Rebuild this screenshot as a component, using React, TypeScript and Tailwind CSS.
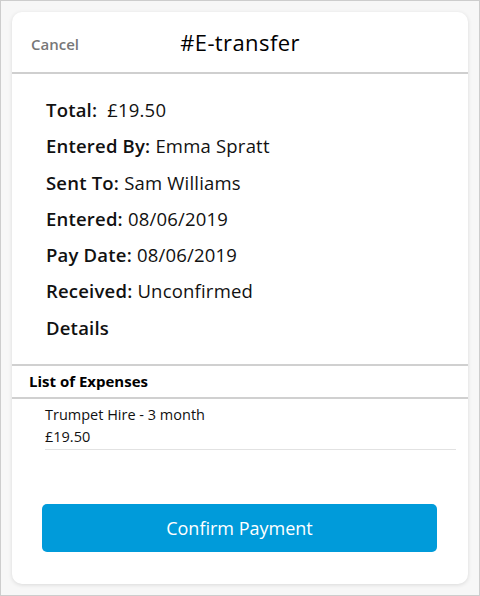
const ROWS = [
  { label: 'Total:', value: '£19.50', gap: 'ml-[10px]' },
  { label: 'Entered By:', value: 'Emma Spratt', gap: 'ml-[5px]' },
  { label: 'Sent To:', value: 'Sam Williams', gap: 'ml-[5px]' },
  { label: 'Entered:', value: '08/06/2019', gap: 'ml-[5px]' },
  { label: 'Pay Date:', value: '08/06/2019', gap: 'ml-[5px]' },
  { label: 'Received:', value: 'Unconfirmed', gap: 'ml-[5px]' },
  { label: 'Details', value: '', gap: '' },
]

const EXPENSES = [{ name: 'Trumpet Hire - 3 month', amount: '£19.50' }]

export default function App() {
  return (
    <div className="w-[480px] h-[596px] border border-[#cdcdcd] bg-[#f7f7f7] p-[11px] font-['Open_Sans','Liberation_Sans',sans-serif] text-[#111]">
      <div className="h-full flex flex-col rounded-[10px] bg-white shadow-[0_1px_4px_rgba(0,0,0,0.12)]">
        {/* header */}
        <div className="relative h-[62px] flex items-center justify-center border-b-2 border-[#cfcfcf]">
          <button className="absolute left-[19px] top-[21px] text-[15px] font-semibold text-[#777]">Cancel</button>
          <h1 className="text-[22px] tracking-[0.4px] text-black">#E-transfer</h1>
        </div>

        {/* summary */}
        <div className="pl-[34px] pt-[18px] pb-[18px]">
          {ROWS.map((r) => (
            <div key={r.label} className="leading-[36.3px] text-[18.5px] tracking-[0.2px]">
              <span className="font-semibold">{r.label}</span>
              {r.value && <span className={r.gap}>{r.value}</span>}
            </div>
          ))}
        </div>

        {/* expenses */}
        <div className="border-t-2 border-[#d0d0d0]">
          <div className="h-[33px] flex items-center pl-[17px] text-[15px] font-bold text-black border-b-2 border-[#d0d0d0]">
            List of Expenses
          </div>
          {EXPENSES.map((e) => (
            <div key={e.name} className="ml-[33px] mr-[12px] pt-[5px] pb-[1px] border-b border-[#e2e2e2] text-[14.5px] leading-[22px]">
              <div>{e.name}</div>
              <div>{e.amount}</div>
            </div>
          ))}
        </div>

        <div className="mt-[54px] pl-[30px] pr-[31px]">
          <button className="w-full h-[48px] rounded-[5px] bg-[#009bda] text-white text-[18px]">
            Confirm Payment
          </button>
        </div>
      </div>
    </div>
  )
}
